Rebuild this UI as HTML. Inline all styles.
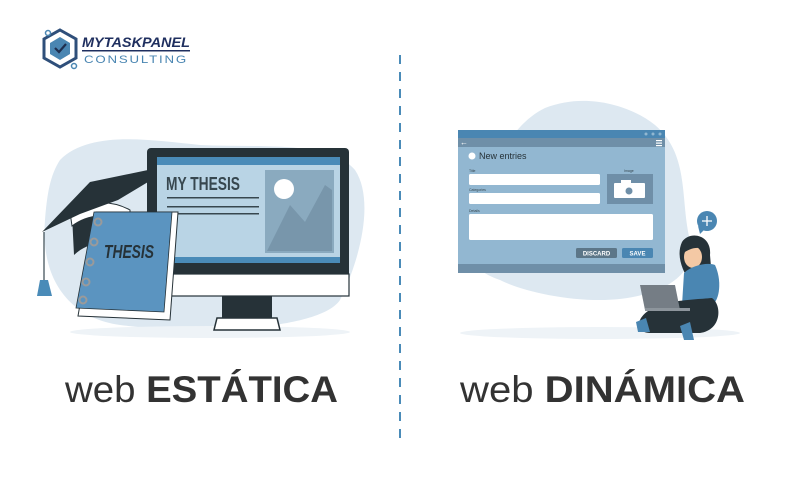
<!DOCTYPE html>
<html><head><meta charset="utf-8"><style>
html,body{margin:0;padding:0;background:#fff;width:800px;height:500px;overflow:hidden}
svg{display:block}
</style></head><body>
<svg width="800" height="500" viewBox="0 0 800 500" xmlns="http://www.w3.org/2000/svg" font-family="Liberation Sans, sans-serif">
<!-- logo -->
<g>
<path d="M60 30 L76 39 L76 58 L60 67 L44 58 L44 39 Z" fill="none" stroke="#2f4f7a" stroke-width="3"/>
<path d="M60 37 L70 43 L70 54 L60 60 L50 54 L50 43 Z" fill="#4a86b2"/>
<path d="M55 48 L59 52 L66 44" fill="none" stroke="#1f2f4f" stroke-width="2.2"/>
<circle cx="48" cy="33" r="2.5" fill="none" stroke="#4a86b2" stroke-width="1.5"/>
<circle cx="74" cy="66" r="2.5" fill="none" stroke="#4a86b2" stroke-width="1.5"/>
<text x="82" y="47" font-size="14" font-weight="bold" font-style="italic" fill="#1f2f5f" textLength="108" lengthAdjust="spacingAndGlyphs">MYTASKPANEL</text>
<rect x="82" y="50" width="108" height="1.5" fill="#1f2f5f"/>
<text x="84" y="63" font-size="11" fill="#4a86b2" letter-spacing="1.5" textLength="104" lengthAdjust="spacingAndGlyphs">CONSULTING</text>
</g>
<!-- divider -->
<line x1="400" y1="55" x2="400" y2="446" stroke="#4a8bb8" stroke-width="2" stroke-dasharray="9 8"/>
<!-- left blob -->
<path d="M60 160 C90 130 150 140 200 145 C260 148 330 140 355 170 C375 200 360 260 340 300 C320 330 200 335 120 325 C70 318 40 280 45 220 C47 195 50 175 60 160 Z" fill="#dde8f1"/>
<ellipse cx="210" cy="332" rx="140" ry="6" fill="#eef3f7"/>
<!-- monitor -->
<rect x="147" y="148" width="202" height="148" rx="4" fill="#263238"/>
<rect x="147" y="274" width="202" height="22" fill="#fff" stroke="#263238" stroke-width="1.2"/>
<rect x="157" y="157" width="183" height="106" fill="#b9d4e5"/>
<rect x="157" y="157" width="183" height="8" fill="#4a8bb8"/>
<rect x="157" y="257" width="183" height="6" fill="#4a8bb8"/>
<rect x="265" y="170" width="69" height="83" fill="#8aaabf"/>
<polygon points="267,251 290,205 305,222 325,185 332,190 332,251" fill="#7896ab"/>
<circle cx="284" cy="189" r="10" fill="#fff"/>
<text x="166" y="190" font-size="18" font-weight="bold" fill="#37474f" textLength="74" lengthAdjust="spacingAndGlyphs">MY THESIS</text>
<rect x="167" y="197" width="92" height="1.5" fill="#37474f"/>
<rect x="167" y="206" width="92" height="1.5" fill="#37474f"/>
<rect x="167" y="213" width="92" height="1.5" fill="#37474f"/>
<rect x="222" y="296" width="50" height="22" fill="#263238"/>
<path d="M217 318 L277 318 L280 330 L214 330 Z" fill="#fff" stroke="#263238" stroke-width="1.5"/>
<!-- cap -->
<path d="M72 215 C88 205 110 205 128 215 L126 250 C105 240 88 242 74 255 Z" fill="#263238"/>
<path d="M70 212 C88 200 112 200 130 210 L130 222 C110 212 88 214 72 226 Z" fill="#fff" stroke="#263238" stroke-width="1"/>
<polygon points="42,232 90,182 148,170 148,182 118,200 80,214" fill="#263238"/>
<line x1="44" y1="232" x2="44" y2="280" stroke="#37474f" stroke-width="1.2"/>
<polygon points="40,280 48,280 52,296 37,296" fill="#4a8bb8"/>
<!-- book -->
<polygon points="96,212 178,212 170,320 78,316" fill="#fff" stroke="#263238" stroke-width="1"/>
<polygon points="94,212 172,212 164,312 76,308" fill="#5b94c0" stroke="#263238" stroke-width="0.8"/>
<text x="104" y="258" font-size="18" font-weight="bold" font-style="italic" fill="#263238" textLength="50" lengthAdjust="spacingAndGlyphs">THESIS</text>
<g fill="none" stroke="#9a9a9a" stroke-width="2">
<circle cx="98" cy="222" r="3.5"/><circle cx="94" cy="242" r="3.5"/><circle cx="90" cy="262" r="3.5"/><circle cx="86" cy="282" r="3.5"/><circle cx="83" cy="300" r="3.5"/>
</g>
<!-- right blob -->
<path d="M545 108 C585 92 630 105 655 125 C690 155 680 200 690 240 C700 280 650 300 600 300 C560 300 520 290 500 280 C470 270 460 250 470 220 C490 170 510 125 545 108 Z" fill="#dde8f1"/>
<ellipse cx="600" cy="333" rx="140" ry="6" fill="#eef3f7"/>
<!-- window -->
<rect x="458" y="130" width="207" height="143" rx="2" fill="#92b7d1"/>
<rect x="458" y="130" width="207" height="8" fill="#4a86b2"/>
<rect x="458" y="138" width="207" height="9" fill="#6f8fa8"/>
<rect x="458" y="264" width="207" height="9" fill="#6f8fa8"/>
<circle cx="646" cy="134" r="1.5" fill="#92b7d1"/><circle cx="653" cy="134" r="1.5" fill="#92b7d1"/><circle cx="660" cy="134" r="1.5" fill="#92b7d1"/>
<text x="460" y="145" font-size="8" fill="#fff">←</text>
<rect x="656" y="140" width="6" height="1.2" fill="#fff"/><rect x="656" y="142.5" width="6" height="1.2" fill="#fff"/><rect x="656" y="145" width="6" height="1.2" fill="#fff"/>
<circle cx="472" cy="156" r="3.5" fill="#fff"/>
<text x="479" y="159" font-size="9" fill="#263238">New entries</text>
<text x="469" y="172" font-size="3.5" fill="#37474f">Title</text>
<rect x="469" y="174" width="131" height="11" rx="1.5" fill="#fff"/>
<text x="469" y="191" font-size="3.5" fill="#37474f">Categories</text>
<rect x="469" y="193" width="131" height="11" rx="1.5" fill="#fff"/>
<text x="469" y="212" font-size="3.5" fill="#37474f">Details</text>
<rect x="469" y="214" width="184" height="26" rx="1.5" fill="#fff"/>
<text x="624" y="172" font-size="3.5" fill="#37474f">Image</text>
<rect x="607" y="174" width="46" height="30" fill="#6f8fa8"/>
<rect x="614" y="183" width="31" height="15" rx="1" fill="#fff"/><rect x="621" y="180" width="10" height="4" fill="#fff"/>
<circle cx="629" cy="191" r="3.5" fill="#6f8fa8"/>
<rect x="576" y="248" width="41" height="10" rx="1.5" fill="#5c7688"/>
<text x="596.5" y="255.5" font-size="6" font-weight="bold" fill="#fff" text-anchor="middle">DISCARD</text>
<rect x="622" y="248" width="31" height="10" rx="1.5" fill="#4a86b2"/>
<text x="637.5" y="255.5" font-size="6" font-weight="bold" fill="#fff" text-anchor="middle">SAVE</text>
<!-- plus bubble -->
<circle cx="707" cy="221" r="10" fill="#4a86b2"/>
<polygon points="698,226 700,234 704,230" fill="#4a86b2"/>
<path d="M707 216 V226 M702 221 H712" stroke="#fff" stroke-width="1.3"/>
<!-- woman -->
<path d="M682 242 C690 230 712 235 710 255 L712 278 L690 282 C682 270 676 255 682 242 Z" fill="#263238"/>
<ellipse cx="693" cy="257" rx="9" ry="11" fill="#f4c9a5"/>
<path d="M682 250 C688 236 705 238 706 250 C698 246 690 248 682 254 Z" fill="#263238"/>
<path d="M684 273 C692 265 708 262 715 265 C722 280 720 300 712 305 L682 305 Z" fill="#4a86b2"/>
<path d="M640 320 C650 300 690 300 712 298 C722 305 722 330 700 333 L650 333 C640 333 636 325 640 320 Z" fill="#263238"/>
<polygon points="640,285 675,285 680,310 645,310" fill="#757d85"/>
<rect x="645" y="308" width="45" height="3" fill="#8d959c"/>
<polygon points="636,322 646,318 650,332 638,332" fill="#4a86b2"/>
<polygon points="680,326 690,322 694,340 684,340" fill="#4a86b2"/>
<!-- titles -->
<text x="65" y="402" font-size="37" fill="#333" textLength="273" lengthAdjust="spacingAndGlyphs"><tspan>web </tspan><tspan font-weight="bold">ESTÁTICA</tspan></text>
<text x="460" y="402" font-size="37" fill="#333" textLength="285" lengthAdjust="spacingAndGlyphs"><tspan>web </tspan><tspan font-weight="bold">DINÁMICA</tspan></text>
</svg>
</body></html>
